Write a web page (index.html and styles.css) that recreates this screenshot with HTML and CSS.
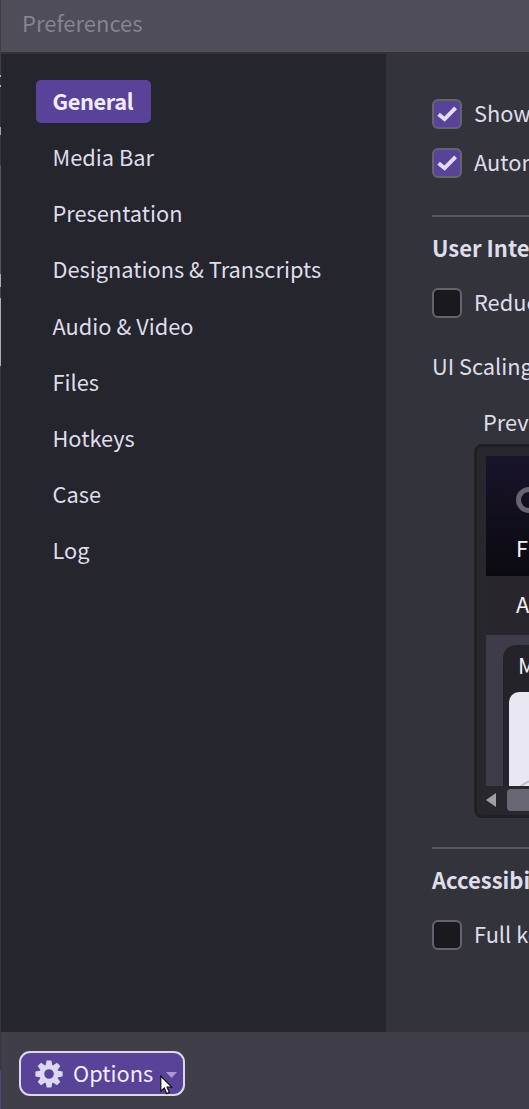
FILE: index.html
```html
<!DOCTYPE html>
<html lang="en">
<head>
<meta charset="utf-8">
<title>Preferences</title>
<link rel="stylesheet" href="styles.css">
</head>
<body>
<div class="edge"></div>
<div class="window">
  <header class="titlebar">Preferences</header>
  <div class="main">
    <nav class="sidebar">
      <a class="tab active">General</a>
      <a class="tab">Media Bar</a>
      <a class="tab">Presentation</a>
      <a class="tab">Designations &amp; Transcripts</a>
      <a class="tab">Audio &amp; Video</a>
      <a class="tab">Files</a>
      <a class="tab">Hotkeys</a>
      <a class="tab">Case</a>
      <a class="tab">Log</a>
    </nav>
    <section class="content">
      <label class="option first"><span class="box checked"><svg viewBox="0 0 30 30"><path d="M6.6 15.2l6 5L23.6 8.8"/></svg></span>Show</label>
      <label class="option second"><span class="box checked"><svg viewBox="0 0 30 30"><path d="M6.6 15.2l6 5L23.6 8.8"/></svg></span>Autom</label>
      <hr class="rule">
      <h2 class="heading">User Inte</h2>
      <label class="option"><span class="box"></span>Reduc</label>
      <div class="scaling">UI Scaling</div>
      <div class="caption">Prev</div>
      <div class="preview">
        <div class="screen">
          <div class="hero">
            <svg class="ring" viewBox="0 0 26 26"><circle cx="13" cy="13" r="10.5"/></svg>
            <span>F</span>
          </div>
          <div class="menu">A</div>
          <div class="stage">
            <div class="card">
              <div class="card-title">M</div>
              <div class="paper"><svg viewBox="0 0 40 94"><path d="M12 94Q18 89 28 87"/></svg></div>
            </div>
          </div>
        </div>
        <div class="scroll">
          <svg class="arrow" viewBox="0 0 11 14"><path d="M0 7L10 0V14z"/></svg>
          <div class="thumb"></div>
        </div>
      </div>
      <hr class="rule last">
      <h2 class="heading">Accessibi</h2>
      <label class="option"><span class="box"></span>Full ke</label>
    </section>
  </div>
  <footer class="footer">
    <button class="options">
      <svg class="gear" viewBox="-14 -14 28 28">
        <path id="tooth" d="M-3.4-8L-2.4-13.6H2.4L3.4-8z"/>
        <use href="#tooth" transform="rotate(45)"/>
        <use href="#tooth" transform="rotate(90)"/>
        <use href="#tooth" transform="rotate(135)"/>
        <use href="#tooth" transform="rotate(180)"/>
        <use href="#tooth" transform="rotate(225)"/>
        <use href="#tooth" transform="rotate(270)"/>
        <use href="#tooth" transform="rotate(315)"/>
        <circle class="hub" r="7.1"/>
      </svg>
      <span>Options</span>
      <svg class="caret" viewBox="0 0 11 6"><path d="M0 0H11L5.5 6z"/></svg>
    </button>
    <svg class="cursor" viewBox="0 0 13 20"><path d="M.8 1V16.2L4.3 13L6.6 18.6L9.4 17.4L7.1 12.2H11.8z"/></svg>
  </footer>
</div>
</body>
</html>
```
FILE: styles.css
```css
* { box-sizing: border-box; }
body {
  margin: 0;
  width: 529px;
  height: 1109px;
  display: flex;
  overflow: hidden;
  background: #33333c;
  color: #dfddea;
  font: 21.8px/30px "Noto Sans CJK SC", "Noto Sans", sans-serif;
}
/* Sliver of the window behind */
.edge {
  flex: 0 0 1px;
  background: linear-gradient(#3d3d45 0 75px, #b4b4bc 75px 77px, #303038 77px 85px, #b4b4bc 85px 87px, #303038 87px 127px, #a0a0a8 127px 135px, #36363e 135px 165px, #55555c 165px 274px, #acacb4 274px 287px, #44444c 287px 298px, #acacb4 298px 366px, #36363e 366px 1070px, #51408c 1070px);
}
.window { flex: 1; min-width: 0; display: flex; flex-direction: column; }
.titlebar {
  flex: 0 0 54px;
  padding: 7px 0 0 21px;
  background: #4e4d58;
  border-bottom: 2px solid #33323b;
  color: #85848f;
  font-size: 22px;
}
.main { flex: 0 0 978px; display: flex; min-height: 0; }
.sidebar {
  flex: 0 0 385px;
  padding: 26px 0 0 35px;
  background: #25252d;
  display: flex;
  flex-direction: column;
  align-items: flex-start;
  gap: 13.2px;
}
.tab { height: 43px; padding: 5.8px 16.5px; border-radius: 5px; white-space: nowrap; }
.active { width: 115px; background: #594398; color: #f1edff; font-weight: 700; letter-spacing: -.4px; }
.content { flex: 1; min-width: 0; overflow: hidden; padding: 45px 0 0 46px; background: #33333c; white-space: nowrap; }
.option { display: flex; align-items: flex-start; gap: 12px; height: 30px; line-height: 27px; }
.first { line-height: 28px; }
.second { margin-top: 19px; line-height: 28px; }
.box { flex: 0 0 30px; height: 30px; border: 2px solid #666371; border-radius: 6px; background: #19191e; }
.checked { background: #594398; }
.box svg { display: block; width: 30px; height: 30px; margin: -2px; }
.box path { fill: none; stroke: #e2dcf2; stroke-width: 3.9; }
.rule { margin: 37px 0 0; border: 0; height: 2px; background: #565560; }
.heading { margin: 15px 0 25px; font-size: 22px; line-height: 31px; font-weight: 700; }
.scaling { margin-top: 33px; }
.caption { margin: 26px 0 7px 51px; }
.preview {
  width: 300px;
  height: 374px;
  margin-left: 42px;
  border: 3px solid #1f1f24;
  border-radius: 8px;
  padding: 9px;
  background: #27272d;
}
.screen { height: 330px; display: flex; flex-direction: column; background: #403b48; }
.hero { height: 120px; padding: 31px 0 0 30px; background: linear-gradient(#19142a, #0b0910); color: #f4f2f8; display: flex; flex-direction: column; }
.hero span { margin-top: 20px; }
.ring { width: 26px; height: 26px; fill: none; stroke: #67636f; stroke-width: 5; }
.menu { height: 59px; padding: 13px 30px; background: #28252c; color: #f4f2f8; }
.stage { flex: 1; min-height: 0; padding: 10px 0 0 17px; }
.card { height: 100%; padding-left: 6px; border-radius: 13px 0 0 0; background: #242329; color: #f4f2f8; }
.card-title { height: 47px; padding: 5px 0 0 9px; }
.paper { height: 94px; border-radius: 10px 0 0 0; background: #e8e7f2; overflow: hidden; }
.paper svg { display: block; width: 40px; height: 94px; fill: none; stroke: #c0bfc9; stroke-width: 2; }
.scroll { display: flex; align-items: center; height: 28px; }
.arrow { width: 11px; height: 14px; fill: #a09fa6; }
.thumb { height: 22px; flex: 1; margin-left: 10px; border-radius: 4px; background: #696773; }
.last { margin-top: 29px; }
.footer { flex: 0 0 77px; position: relative; padding: 19px 0 0 18px; background: #3f3e49; }
.options {
  width: 166px;
  height: 45px;
  display: flex;
  align-items: center;
  padding: 0 0 0 14px;
  border: 2px solid #dcd7ec;
  border-radius: 11px;
  background: #594398;
  color: #f1edff;
  font: inherit;
}
.options span { margin-top: -2px; }
.gear { width: 28px; height: 28px; margin-right: 10px; fill: #dcd8ef; }
.hub { fill: none; stroke: #dcd8ef; stroke-width: 4.6; }
.caret { width: 11px; height: 6px; margin: 3px 0 0 13px; fill: #a99bd0; }
.cursor { position: absolute; left: 159px; top: 43px; width: 13px; height: 20px; fill: #fff; stroke: #111; stroke-width: 1.2; }
```
